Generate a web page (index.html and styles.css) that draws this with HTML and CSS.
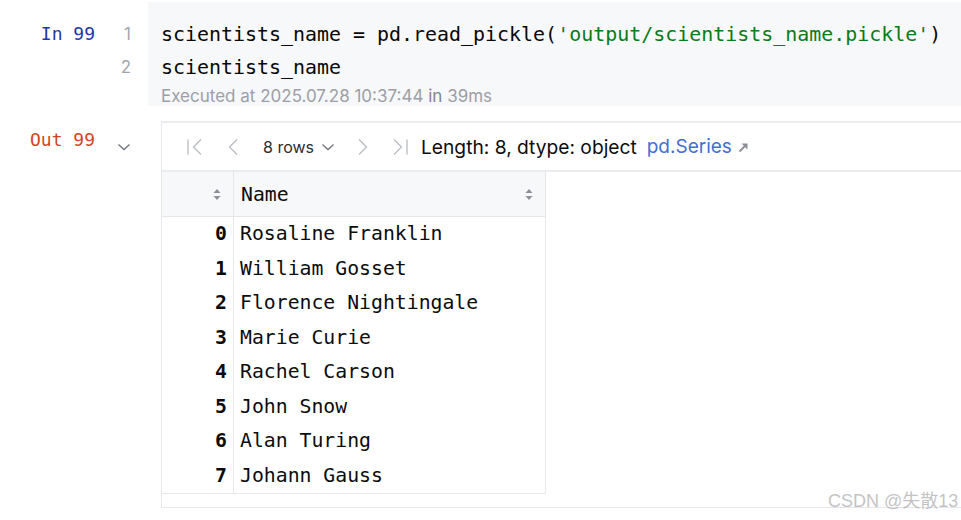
FILE: index.html
```html
<!DOCTYPE html>
<html>
<head>
<meta charset="utf-8">
<link rel="stylesheet" href="styles.css">
</head>
<body>
<div class="cell-in">
  <div class="prompt in">In 99</div>
  <div class="gutter"><div>1</div><div>2</div></div>
  <div class="code">
    <div class="line">scientists_name = pd.read_pickle(<span class="str">'output/scientists_name.pickle'</span>)</div>
    <div class="line">scientists_name</div>
    <div class="exec">Executed at 2025.07.28 10:37:44 <span class="dim">in</span> 39ms</div>
  </div>
</div>
<div class="cell-out">
  <div class="prompt out">Out 99</div>
  <div class="collapse">
    <svg width="14" height="8" viewBox="0 0 14 8"><path d="M1.5 1.5 L7 6.5 L12.5 1.5" fill="none" stroke="#6f737a" stroke-width="1.3"/></svg>
  </div>
  <div class="output">
    <div class="toolbar">
      <svg class="nav first" width="18" height="18" viewBox="0 0 18 18"><path d="M2 1.5 V16.5" stroke="#b9bcc2" stroke-width="1.3"/><path d="M15 1.5 L7.5 9 L15 16.5" fill="none" stroke="#b9bcc2" stroke-width="1.3"/></svg>
      <svg class="nav prev" width="12" height="18" viewBox="0 0 12 18"><path d="M10 1.5 L2.5 9 L10 16.5" fill="none" stroke="#b9bcc2" stroke-width="1.3"/></svg>
      <span class="rows">8 rows</span>
      <svg class="dd" width="14" height="8" viewBox="0 0 14 8"><path d="M1.5 1.5 L7 6.5 L12.5 1.5" fill="none" stroke="#6f737a" stroke-width="1.3"/></svg>
      <svg class="nav next" width="12" height="18" viewBox="0 0 12 18"><path d="M2 1.5 L9.5 9 L2 16.5" fill="none" stroke="#b9bcc2" stroke-width="1.3"/></svg>
      <svg class="nav last" width="18" height="18" viewBox="0 0 18 18"><path d="M3 1.5 L10.5 9 L3 16.5" fill="none" stroke="#b9bcc2" stroke-width="1.3"/><path d="M16 1.5 V16.5" stroke="#b9bcc2" stroke-width="1.3"/></svg>
      <span class="meta">Length: 8, dtype: object</span>
      <span class="link">pd.Series</span>
      <svg class="ext" width="11" height="11" viewBox="0 0 11 11"><path d="M1.5 9.5 L8.5 2.5" stroke="#8a8d94" stroke-width="1.8"/><path d="M3.5 1.5 H9.5 V7.5 Z" fill="#8a8d94"/></svg>
    </div>
    <div class="table">
      <div class="hrow">
        <div class="hcell idx"><svg class="sort" width="8" height="13" viewBox="0 0 8 13"><path d="M4 1 L7.5 5 H0.5 Z M4 12 L7.5 8 H0.5 Z" fill="#8c8f96"/></svg></div>
        <div class="hcell name"><span>Name</span><svg class="sort" width="8" height="13" viewBox="0 0 8 13"><path d="M4 1 L7.5 5 H0.5 Z M4 12 L7.5 8 H0.5 Z" fill="#8c8f96"/></svg></div>
      </div>
      <div class="row"><div class="idx">0</div><div class="val">Rosaline Franklin</div></div>
      <div class="row"><div class="idx">1</div><div class="val">William Gosset</div></div>
      <div class="row"><div class="idx">2</div><div class="val">Florence Nightingale</div></div>
      <div class="row"><div class="idx">3</div><div class="val">Marie Curie</div></div>
      <div class="row"><div class="idx">4</div><div class="val">Rachel Carson</div></div>
      <div class="row"><div class="idx">5</div><div class="val">John Snow</div></div>
      <div class="row"><div class="idx">6</div><div class="val">Alan Turing</div></div>
      <div class="row"><div class="idx">7</div><div class="val">Johann Gauss</div></div>
    </div>
  </div>
</div>
<div class="watermark">CSDN @失散13</div>
</body>
</html>
```

FILE: styles.css
```css
html, body {
  margin: 0;
  padding: 0;
  background: #ffffff;
  width: 961px;
  height: 520px;
  overflow: hidden;
  position: relative;
}
body {
  font-family: "Inter", "Liberation Sans", sans-serif;
  color: #000;
}
.cell-in {
  display: flex;
  margin-top: 2px;
  height: 104px;
}
.prompt {
  width: 95px;
  flex: none;
  text-align: right;
  font-family: "DejaVu Sans Mono", monospace;
  font-size: 18px;
}
.prompt.in {
  color: #2137a6;
  padding-top: 21px;
  line-height: 22px;
}
.gutter {
  width: 36px;
  padding-right: 17px;
  flex: none;
  text-align: right;
  font-family: "Inter", "Liberation Sans", sans-serif;
  font-size: 17px;
  color: #a2a6ae;
  padding-top: 15.5px;
  line-height: 33px;
}
.code {
  flex: 1;
  background: #f7f8fa;
  padding: 15.5px 0 0 13px;
  font-family: "DejaVu Sans Mono", monospace;
  font-size: 19.95px;
  color: #080808;
}
.line {
  line-height: 33px;
  height: 33px;
  white-space: pre;
}
.str {
  color: #067d17;
}
.exec {
  font-family: "Inter", "Liberation Sans", sans-serif;
  font-size: 17px;
  line-height: 20px;
  color: #9c9fa6;
  margin-top: 2px;
}
.exec .dim {
  color: #82858c;
}
.cell-out {
  display: flex;
  margin-top: 15px;
}
.prompt.out {
  color: #d4451f;
  padding-top: 8px;
  line-height: 22px;
}
.collapse {
  width: 66px;
  flex: none;
  padding-top: 22px;
  padding-left: 22px;
  box-sizing: border-box;
}
.collapse svg {
  display: block;
}
.output {
  flex: none;
  width: 820px;
  height: 387px;
  border-top: 2px solid #ebecef;
  border-left: 1px solid #e6e7ea;
  border-bottom: 1px solid #e6e7ea;
  box-sizing: border-box;
}
.toolbar {
  height: 47px;
  border-bottom: 2px solid #ebecef;
  display: flex;
  align-items: center;
  padding-left: 24px;
}
.toolbar svg {
  display: block;
  flex: none;
}
.nav.prev {
  margin-left: 23px;
}
.rows {
  margin-left: 24px;
  font-size: 16px;
  color: #2b2d31;
}
.dd {
  margin-left: 7px;
}
.nav.next {
  margin-left: 22px;
}
.nav.last {
  margin-left: 22px;
}
.meta {
  margin-left: 12px;
  font-size: 19.2px;
  color: #0c0c0d;
}
.link {
  margin-left: 10px;
  font-size: 19px;
  color: #3f6fd3;
}
.ext {
  margin-left: 6px;
  margin-top: 2px;
}
.table {
  width: 384px;
  border-right: 1px solid #e6e7ea;
  border-bottom: 1px solid #e6e7ea;
  box-sizing: border-box;
}
.hrow {
  display: flex;
  height: 45px;
  background: #f7f8fa;
  border-bottom: 1px solid #e6e7ea;
  box-sizing: border-box;
}
.hcell {
  display: flex;
  align-items: center;
}
.hcell.idx {
  width: 72px;
  flex: none;
  justify-content: flex-end;
  padding-right: 12px;
  box-sizing: border-box;
  border-right: 1px solid #e6e7ea;
}
.hcell.name {
  flex: 1;
  justify-content: space-between;
  padding: 0 12px 0 7px;
  font-family: "DejaVu Sans Mono", monospace;
  font-size: 19.8px;
  color: #0c0c0d;
}
.sort {
  display: block;
}
.row {
  display: flex;
  height: 34.5px;
  align-items: center;
}
.row .idx {
  width: 72px;
  flex: none;
  text-align: right;
  padding-right: 6px;
  box-sizing: border-box;
  border-right: 1px solid #e6e7ea;
  height: 100%;
  line-height: 33.5px;
  font-family: "DejaVu Sans Mono", monospace;
  font-weight: bold;
  font-size: 19.8px;
  color: #0c0c0d;
}
.row .val {
  padding-left: 6px;
  padding-bottom: 1px;
  font-family: "DejaVu Sans Mono", monospace;
  font-size: 19.8px;
  color: #0c0c0d;
  white-space: pre;
}
.watermark {
  position: absolute;
  left: 828px;
  top: 489px;
  font-family: "Liberation Sans", "Noto Sans CJK SC", sans-serif;
  font-size: 18px;
  color: rgba(175, 175, 175, 0.75);
  line-height: 24px;
}
```
